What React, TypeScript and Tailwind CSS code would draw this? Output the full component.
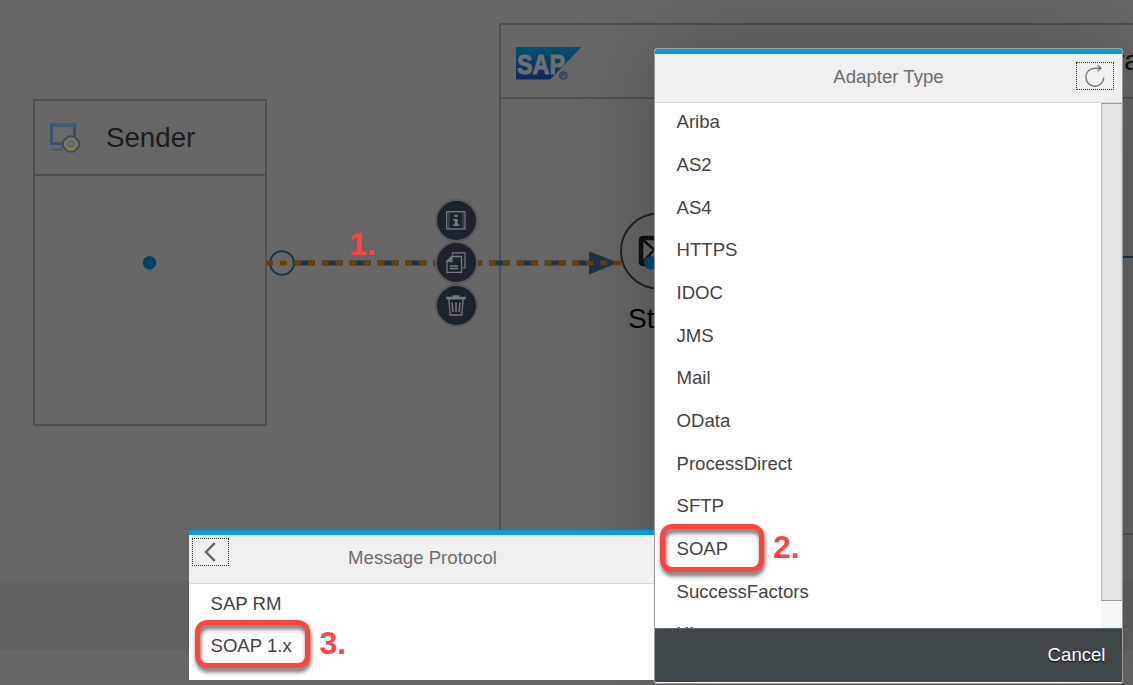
import type { ReactNode } from "react";

const ADAPTERS = [
  "Ariba",
  "AS2",
  "AS4",
  "HTTPS",
  "IDOC",
  "JMS",
  "Mail",
  "OData",
  "ProcessDirect",
  "SFTP",
  "SOAP",
  "SuccessFactors",
  "XI",
];

const PROTOCOLS = ["SAP RM", "SOAP 1.x"];

function SystemIcon() {
  return (
    <svg width="34" height="34" viewBox="0 0 34 34" fill="none">
      <rect x="3.500" y="4" width="23" height="18.500" fill="#68696b" stroke="#3a5070" strokeWidth="3" />
      <path d="M2 4h26" stroke="#385a74" strokeWidth="3" />
      <path d="M15 23v4M4 28.500h10" stroke="#46566a" strokeWidth="2" />
      <path d="M20 15.500h6l5 5v5l-5 5h-6l-5-5v-5z" fill="#74776a" stroke="#3f4b5b" strokeWidth="2" strokeLinejoin="round" />
      <path d="M17 26l3.500-1.500h5L29 26l-3.500 3.500h-5z" fill="#87803a" />
      <circle cx="23" cy="23" r="2.800" fill="#6b6f74" stroke="#525c66" strokeWidth="1.200" />
    </svg>
  );
}

function SapLogo() {
  return (
    <svg width="67" height="34" viewBox="0 0 67 34">
      <defs>
        <linearGradient id="sap" x1="0" y1="0" x2="0" y2="1">
          <stop offset="0" stopColor="#00546f" />
          <stop offset="0.5" stopColor="#0b3b67" />
          <stop offset="1" stopColor="#102758" />
        </linearGradient>
      </defs>
      <path d="M0 0h65.500L34 32.500H0z" fill="url(#sap)" />
      <text
        x="1"
        y="27"
        fill="#6b6f73"
        stroke="#6b6f73"
        strokeWidth="1"
        fontFamily="Liberation Sans, sans-serif"
        fontWeight="700"
        fontSize="27"
        textLength="48"
        lengthAdjust="spacingAndGlyphs"
      >
        SAP
      </text>
      <circle cx="47.300" cy="28.500" r="3.600" fill="#56606f" stroke="#303d59" strokeWidth="1.400" />
      <path d="M46 30.500v-4h1.500a1 1 0 0 1 0 2H46" fill="none" stroke="#303d59" strokeWidth="0.900" />
    </svg>
  );
}

function Connector() {
  return (
    <svg className="absolute left-0 top-0" width="1133" height="685" viewBox="0 0 1133 685" fill="none">
      <circle cx="149.500" cy="262.700" r="6.800" fill="#004267" />
      <path d="M294 263H600" stroke="#1b3448" strokeWidth="5" strokeDasharray="21 6.860" />
      <path d="M589 251.200L618 262.800L589 274.400z" fill="#1b3448" />
      <circle cx="282" cy="263" r="11.800" stroke="#1b3448" strokeWidth="2" />
      <path d="M266 263H621" stroke="#6b4100" strokeWidth="4.600" strokeDasharray="6.970 6.960" />
      <path d="M1122 257H1133" stroke="#16324a" strokeWidth="2" />
      <circle cx="658.500" cy="251" r="37.500" stroke="#242424" strokeWidth="2" />
      <rect x="641" y="238" width="36" height="26" rx="2" stroke="#101010" strokeWidth="4.500" />
      <path d="M642 239l17 15 17-15M642 263l11-12" stroke="#101010" strokeWidth="2.500" />
      <circle cx="651" cy="262.700" r="6.800" fill="#004a75" />
    </svg>
  );
}

function ActionButton({ children }: { children: ReactNode }) {
  return (
    <div className="-mb-[0.4px] flex h-[43px] w-[43px] items-center justify-center rounded-full border-[2.5px] border-[#595959] bg-[#1c232c]">
      <svg width="22" height="22" viewBox="0 0 22 22" fill="none" stroke="#74787c" strokeWidth="1.3" className="shrink-0">
        {children}
      </svg>
    </div>
  );
}

function Actions() {
  return (
    <div className="absolute left-[434.8px] top-[198.6px] flex flex-col">
      <ActionButton>
        <rect x="1.700" y="2.700" width="18.300" height="17.300" />
        <path d="M4 3v17M18 3v17" strokeWidth="0.6" />
        <path d="M9.500 5.800h3v2.400h-3zM8 10h4.700v5.600h1.800v1.400H8v-1.400h1.800v-4.200H8z" fill="#74787c" stroke="none" />
      </ActionButton>
      <ActionButton>
        <path d="M7 4.500h9.500v15.800H2V9.200zM4.800 14h8.200M4.800 16.500h8.200" />
        <path d="M2 9.200L7 4.500v5z" fill="#74787c" />
        <path d="M7.500 3V.900H20v15h-2" />
      </ActionButton>
      <ActionButton>
        <path d="M1 3.500h20M7.500 2h7M2.500 3.500v1.300h17V3.500M3.800 5l1.400 16h11.600l1.400-16" />
        <path d="M7 8.500l1 9.500M11 8.500v9.500M15 8.500l-1 9.500" strokeWidth="1.600" />
      </ActionButton>
    </div>
  );
}

function AdapterDialog() {
  return (
    <section className="absolute left-[654px] top-[48px] flex h-[636px] w-[469px] flex-col overflow-hidden rounded-[3px] border border-[#9c9c9c] bg-white pb-[1px]">
      <header className="relative flex h-[54px] shrink-0 items-center justify-center border-b border-t-[5px] border-b-[#d8d8d8] border-t-[#009de0] bg-[#f0f0f0]">
        <h2 className="pb-[2px] text-[18.600px] text-[#6d6d6d]">Adapter Type</h2>
        <button className="absolute right-[8px] top-[8px] flex h-[28px] w-[38px] items-center justify-center border border-dotted border-[#333]">
          <svg width="22" height="24" viewBox="0 0 22 24" fill="none" stroke="#777" strokeWidth="1.400">
            <path d="M19.800 13.500a9 9 0 1 1-9-9.300h6M13.500 1.200l3.500 3-3.500 3" />
          </svg>
        </button>
      </header>
      <div className="flex min-h-0 flex-1 overflow-hidden">
        <ul className="-mt-[2px] flex flex-1 flex-col text-[18.600px] text-[#444]">
          {ADAPTERS.map((name) => (
            <li key={name} className="flex h-[42.670px] shrink-0 items-center pl-[21.500px]">
              {name}
            </li>
          ))}
        </ul>
        <div className="w-[21px] bg-[#f6f6f6]">
          <div className="h-[498px] border border-b-[#999] border-l-[#b5b5b5] border-r-[#cfcfcf] border-t-[#999] bg-[#e5e5e5]" />
        </div>
      </div>
      <footer className="flex h-[54px] shrink-0 items-center justify-end border-t border-[#566673] bg-[#3f4648] pb-[2px] pr-[16.500px] text-[18.600px] text-white [text-shadow:0_1px_1px_#111]">
        Cancel
      </footer>
    </section>
  );
}

function ProtocolDialog() {
  return (
    <section className="absolute left-[189px] top-[530px] flex h-[150px] w-[465px] flex-col overflow-hidden bg-white">
      <header className="relative flex h-[54px] shrink-0 items-center justify-center border-b border-t-[5px] border-b-[#d8d8d8] border-t-[#009de0] bg-[#f0f0f0]">
        <button className="absolute left-[3px] top-[3px] flex h-[28px] w-[37px] items-center justify-center border border-dotted border-[#333]">
          <svg width="12" height="20" viewBox="0 0 12 20" fill="none" stroke="#666" strokeWidth="2.400" className="mr-[1px]">
            <path d="M10.700 1.200L2 10l8.700 8.800" />
          </svg>
        </button>
        <h2 className="pb-[2px] pl-[2px] text-[18.600px] text-[#6d6d6d]">Message Protocol</h2>
      </header>
      <ul className="-mt-[1.7px] flex flex-col text-[18.600px] text-[#444]">
        {PROTOCOLS.map((name) => (
          <li key={name} className="flex h-[42.670px] shrink-0 items-center pl-[21.500px]">
            {name}
          </li>
        ))}
      </ul>
    </section>
  );
}

export default function App() {
  return (
    <main className="relative h-[685px] w-[1133px] overflow-hidden bg-[#666] font-['Liberation_Sans',Arial,sans-serif]">
      <div className="absolute left-0 top-[580px] h-[70px] w-full bg-[#606163]" />

      <section className="absolute left-[33px] top-[99px] flex h-[327px] w-[234px] flex-col border-2 border-[#4f4f4f]">
        <header className="flex h-[75px] items-center border-b-2 border-[#4f4f4f] pl-[13px]">
          <SystemIcon />
          <span className="ml-[24px] text-[27.700px] text-[#1d1d1d]">Sender</span>
        </header>
      </section>

      <section className="absolute left-[499px] top-[23px] h-[512px] w-[680px] border-2 border-[#4f4f4f]">
        <header className="flex h-[74px] items-center border-b-2 border-[#4f4f4f] pl-[15px] pt-[5px]">
          <SapLogo />
        </header>
      </section>

      <Connector />
      <span className="absolute left-[628px] top-[303px] text-[28px] leading-[32px] text-black">St</span>
      <span className="absolute left-[1115px] top-[45px] text-[28px] leading-[32px] text-[#111]">ra</span>
      <Actions />

      <div className="absolute left-[654px] top-[48px] h-[636px] w-[469px] shadow-[0_0_90px_rgba(0,0,0,0.22)]" />
      <ProtocolDialog />
      <AdapterDialog />

      <div className="absolute left-[660px] top-[524px] h-[48px] w-[104px] rounded-[12px] border-[5px] border-[#ff4343] [filter:drop-shadow(1px_4px_2px_rgba(0,0,0,0.6))]" />
      <div className="absolute left-[194.5px] top-[620px] h-[48px] w-[115px] rounded-[12px] border-[5px] border-[#ff4343] [filter:drop-shadow(1px_4px_2px_rgba(0,0,0,0.6))]" />
      <span className="absolute left-[349px] top-[226px] text-[32px] font-bold leading-[36px] text-[#ff4343]">1.</span>
      <span className="absolute left-[773px] top-[529px] text-[32px] font-bold leading-[36px] text-[#ff4343]">2.</span>
      <span className="absolute left-[319.5px] top-[625px] text-[32px] font-bold leading-[36px] text-[#ff4343]">3.</span>
    </main>
  );
}
